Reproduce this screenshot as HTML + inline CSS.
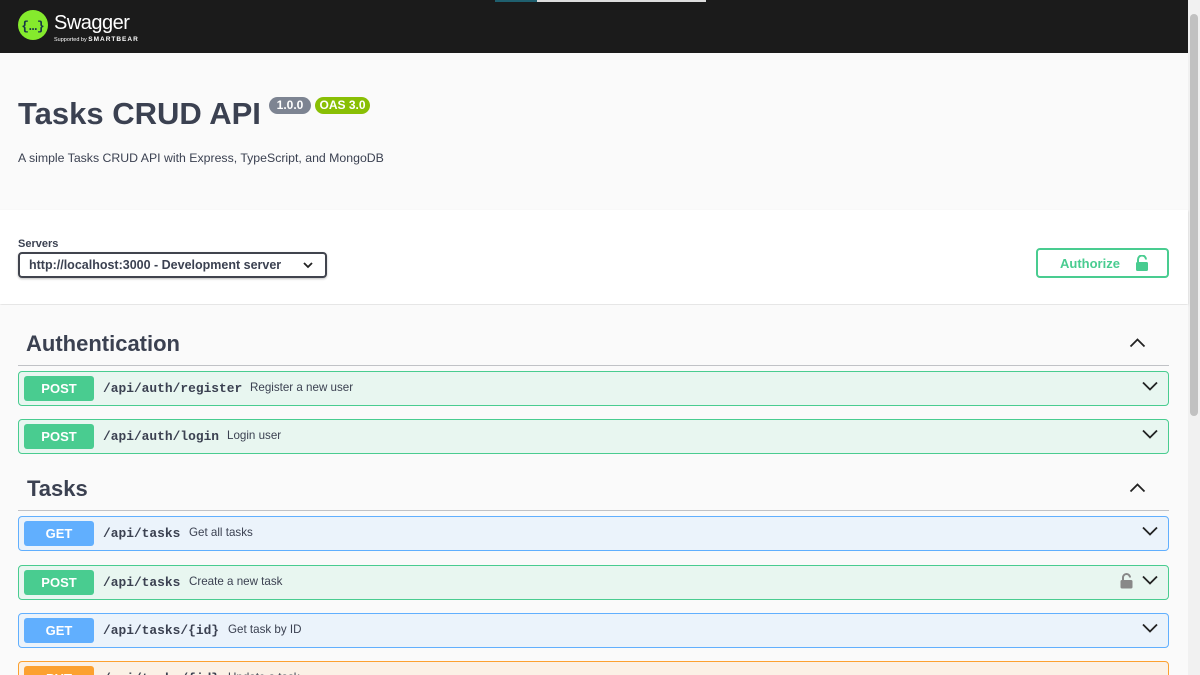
<!DOCTYPE html>
<html><head><meta charset="utf-8"><style>
*{box-sizing:border-box;margin:0;padding:0}
html,body{width:1200px;height:675px;overflow:hidden}
body{background:#fff;font-family:"Liberation Sans",sans-serif;color:#3b4151;position:relative}
.a{position:absolute}
.hdr{left:0;top:0;width:1188px;height:53px;background:#1b1b1b}
.sb{left:1188px;top:0;width:12px;height:675px;background:#f1f1f1}
.thumb{left:1190px;top:14px;width:8px;height:402px;background:#c1c1c1;border-radius:4px}
.info{left:0;top:53px;width:1188px;height:157px;background:#fafafa}
.srv{left:0;top:210px;width:1188px;height:94px;background:#fff;box-shadow:0 1px 2px rgba(0,0,0,.15)}
.main{left:0;top:305px;width:1188px;height:370px;background:#fafafa}
.tag{font-size:22px;font-weight:bold;color:#3b4151}
.line{height:1px;background:rgba(59,65,81,.3);left:18px;width:1151px}
.op{left:18px;width:1151px;height:35px;border-radius:4px;border:1px solid}
.op .m{position:absolute;left:5px;top:4px;width:70px;height:25px;border-radius:3px;color:#fff;font-weight:bold;font-size:13px;text-align:center;line-height:25px}
.op .p{position:absolute;left:84px;top:9px;font-family:"Liberation Mono",monospace;font-weight:bold;font-size:12.9px;color:#3b4151}
.op .d{position:absolute;top:9px;font-size:11.6px;color:#3b4151}
.post{background:#e8f6f0;border-color:#49cc90}.post .m{background:#49cc90}
.get{background:#ebf3fb;border-color:#61affe}.get .m{background:#61affe}
.put{background:#fbf1e6;border-color:#fca130}.put .m{background:#fca130}
.chev{position:absolute;right:10px;top:9px}
</style></head><body>
<div class="a hdr"></div>
<div class="a" style="left:495px;top:0;width:211px;height:2px;background:#ddd"></div>
<div class="a" style="left:495px;top:0;width:42px;height:2px;background:#1f5f6e"></div>
<svg class="a" style="left:17px;top:9px" width="32" height="32" viewBox="0 0 32 32"><circle cx="16" cy="16" r="15" fill="#85ea2d"/><text x="16" y="21" font-size="13" font-family="Liberation Mono" font-weight="bold" fill="#173647" text-anchor="middle">{…}</text></svg>
<div class="a" style="left:54px;top:12px;color:#fff;font-size:20px;letter-spacing:-0.5px">Swagger</div>
<div class="a" style="left:54px;top:36px;color:#fff;font-size:5.5px">Supported by <b style="font-size:6.5px;letter-spacing:1px">SMARTBEAR</b></div>
<div class="a sb"></div><div class="a thumb"></div>
<div class="a info"></div>
<div class="a" style="left:18px;top:96px;font-size:31px;font-weight:bold;color:#3b4151">Tasks CRUD API</div>
<div class="a" style="left:269px;top:97px;width:42px;height:17px;border-radius:9px;background:#7d8492;color:#fff;font-size:12px;font-weight:bold;text-align:center;line-height:17px">1.0.0</div>
<div class="a" style="left:315px;top:97px;width:55px;height:17px;border-radius:9px;background:#89bf04;color:#fff;font-size:12px;font-weight:bold;text-align:center;line-height:17px">OAS 3.0</div>
<div class="a" style="left:18px;top:151px;font-size:12.3px">A simple Tasks CRUD API with Express, TypeScript, and MongoDB</div>
<div class="a srv"></div>
<div class="a" style="left:18px;top:238px;font-size:11px;font-weight:bold">Servers</div>
<div class="a" style="left:18px;top:252px;width:309px;height:26px;border:2px solid #41444e;border-radius:4px;font-size:12.5px;font-weight:bold;padding:4px 0 0 9px;box-shadow:0 1px 2px rgba(0,0,0,.25)">http://localhost:3000 - Development server
<svg style="position:absolute;right:12px;top:8px" width="10" height="7" viewBox="0 0 10 7"><path d="M1 1l4 4 4-4" stroke="#222" stroke-width="1.8" fill="none"/></svg></div>
<div class="a" style="left:1036px;top:248px;width:133px;height:30px;border:2px solid #49cc90;border-radius:4px;color:#49cc90;font-size:13px;font-weight:bold;padding:6px 0 0 22px">Authorize
<svg style="position:absolute;left:97px;top:5px" width="14" height="17" viewBox="0 0 14 17"><path d="M3 7V4.5a4 4 0 0 1 8 0" stroke="#49cc90" stroke-width="2" fill="none"/><rect x="1" y="7" width="12" height="9" rx="1.5" fill="#49cc90"/></svg></div>
<div class="a main"></div>
<div class="a tag" style="left:26px;top:331px">Authentication</div>
<svg class="a" style="left:1129px;top:337px" width="17" height="11" viewBox="0 0 17 11"><path d="M1.5 9.5l7-7 7 7" stroke="#222" stroke-width="1.8" fill="none"/></svg>
<div class="a line" style="top:365px"></div>
<div class="a op post" style="top:371px"><div class="m">POST</div><div class="p">/api/auth/register</div><div class="d" style="left:231px">Register a new user</div><svg class="chev" width="16" height="10" viewBox="0 0 16 10"><path d="M1 1.5l7 7 7-7" stroke="#222" stroke-width="1.8" fill="none"/></svg></div>
<div class="a op post" style="top:419px"><div class="m">POST</div><div class="p">/api/auth/login</div><div class="d" style="left:208px">Login user</div><svg class="chev" width="16" height="10" viewBox="0 0 16 10"><path d="M1 1.5l7 7 7-7" stroke="#222" stroke-width="1.8" fill="none"/></svg></div>
<div class="a tag" style="left:27px;top:476px">Tasks</div>
<svg class="a" style="left:1129px;top:482px" width="17" height="11" viewBox="0 0 17 11"><path d="M1.5 9.5l7-7 7 7" stroke="#222" stroke-width="1.8" fill="none"/></svg>
<div class="a line" style="top:510px"></div>
<div class="a op get" style="top:516px"><div class="m">GET</div><div class="p">/api/tasks</div><div class="d" style="left:170px">Get all tasks</div><svg class="chev" width="16" height="10" viewBox="0 0 16 10"><path d="M1 1.5l7 7 7-7" stroke="#222" stroke-width="1.8" fill="none"/></svg></div>
<div class="a op post" style="top:565px"><div class="m">POST</div><div class="p">/api/tasks</div><div class="d" style="left:170px">Create a new task</div><svg style="position:absolute;right:35px;top:7px" width="13" height="16" viewBox="0 0 13 16"><path d="M3 7V4.5a3.5 3.5 0 0 1 7 0" stroke="#888" stroke-width="2" fill="none"/><rect x="0.5" y="7" width="12" height="8.5" rx="1.5" fill="#888"/></svg><svg class="chev" width="16" height="10" viewBox="0 0 16 10"><path d="M1 1.5l7 7 7-7" stroke="#222" stroke-width="1.8" fill="none"/></svg></div>
<div class="a op get" style="top:613px"><div class="m">GET</div><div class="p">/api/tasks/{id}</div><div class="d" style="left:209px">Get task by ID</div><svg class="chev" width="16" height="10" viewBox="0 0 16 10"><path d="M1 1.5l7 7 7-7" stroke="#222" stroke-width="1.8" fill="none"/></svg></div>
<div class="a op put" style="top:661px"><div class="m">PUT</div><div class="p">/api/tasks/{id}</div><div class="d" style="left:209px">Update a task</div></div>
</body></html>
